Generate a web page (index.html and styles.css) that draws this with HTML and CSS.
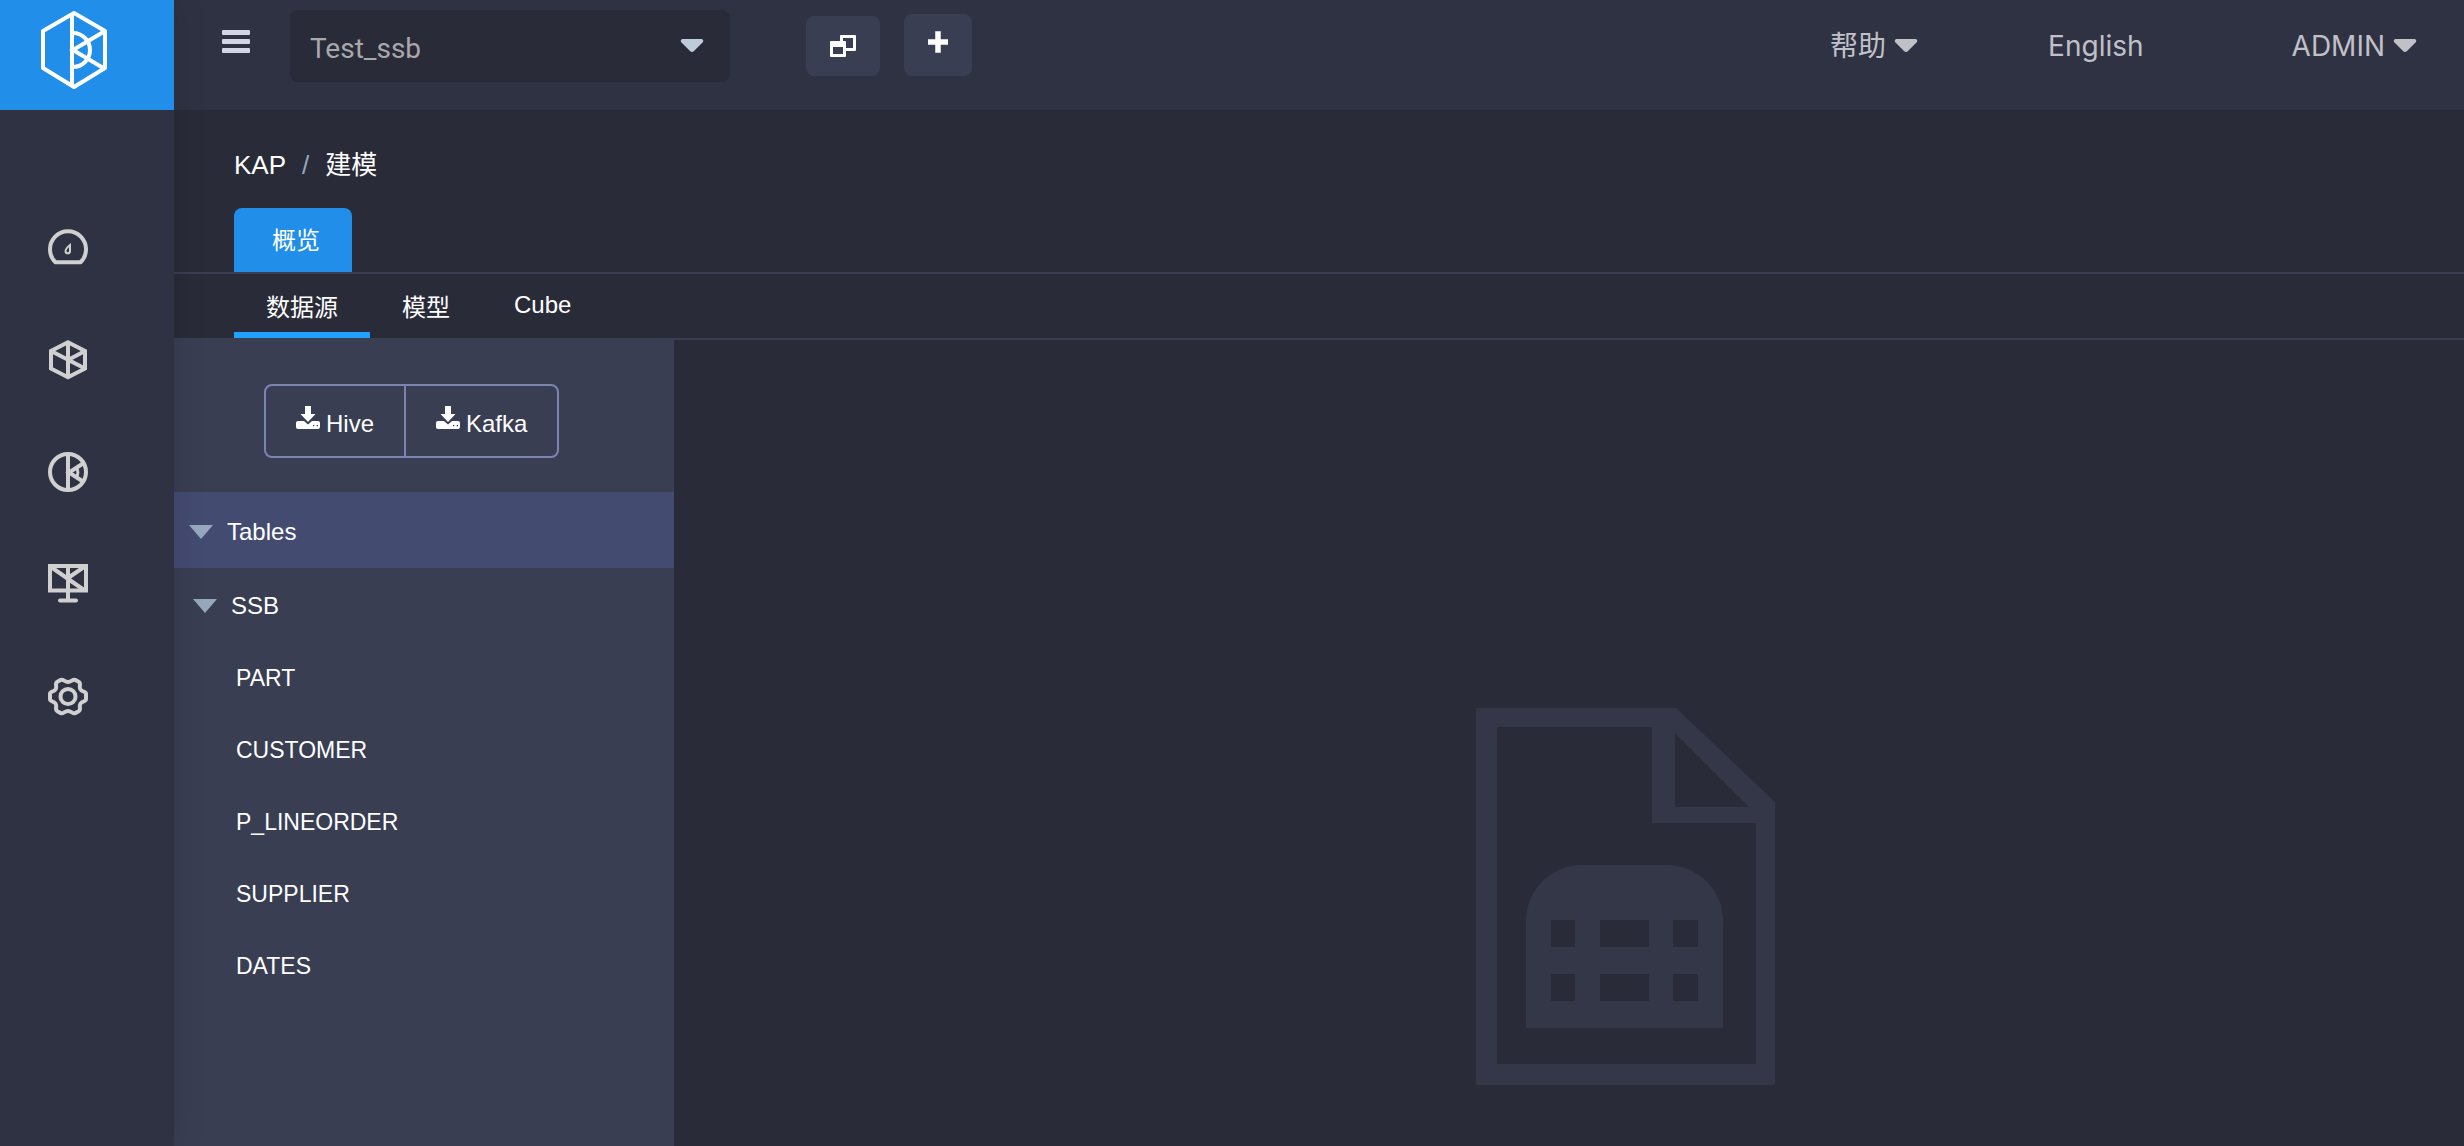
FILE: index.html
```html
<!DOCTYPE html>
<html lang="zh-CN">
<head>
<meta charset="utf-8">
<title>KAP - 建模</title>
<link rel="stylesheet" href="styles.css">
</head>
<body>
<div class="app">
  <aside class="sidebar">
    <a class="logo" href="#" aria-label="KAP">
      <svg width="68" height="80" viewBox="0 0 68 80" fill="none" stroke="#fff" stroke-width="4">
        <path d="M34 3 65 21V58L34 77 3 58V21Z" stroke-linejoin="round"/>
        <path d="M32 3V77M65 21 33 40 65 59"/>
        <path d="M33 23A17 17 0 0 1 33 57"/>
      </svg>
    </a>
    <nav class="side-nav">
      <a href="#" aria-label="仪表盘"><svg class="side-icon" viewBox="0 0 40 40" fill="none" stroke="#d0d0d0" stroke-width="4"><path d="M7.500 34.300A18 18 0 1 1 32.500 34.300Z"/><path d="M22 17C19.500 19 17.500 21 17.500 23.200 17.500 26 22 26 22 23.200Z" stroke-width="2"/></svg></a>
      <a href="#" aria-label="建模"><svg class="side-icon" viewBox="0 0 40 40" fill="none" stroke="#d0d0d0" stroke-width="4"><path d="M20 2.300 37 11V28.500L20 37.300 3 28.500V11Z"/><path d="M20 2V38M3 11 37 28.500M37 11 20 20"/></svg></a>
      <a href="#" aria-label="查询"><svg class="side-icon" viewBox="0 0 40 40" fill="none" stroke="#d0d0d0" stroke-width="4"><circle cx="20" cy="20" r="18"/><path d="M20 2V38M35 11.500 21 20.500 35 29.500"/><path d="M28 15C30.500 18 30.500 23 28 26" stroke-width="3"/></svg></a>
      <a href="#" aria-label="监控"><svg class="side-icon" viewBox="0 0 40 40" fill="none" stroke="#d0d0d0" stroke-width="4"><path d="M2 2H38V26.500H2Z"/><path d="M20 2V36M3 3 36 26M36 3 20 14"/><path d="M12 36.500H28" stroke-linecap="round"/></svg></a>
      <a href="#" aria-label="系统"><svg class="side-icon" viewBox="0 0 40 40" fill="none" stroke="#d0d0d0" stroke-width="4" stroke-linejoin="round"><circle cx="20" cy="20.500" r="7.500"/><path d="M12.500 4C15 2.500 16.500 6 20 6S25 2.500 27.500 4L31 6C33.500 7.500 30.500 10.500 32.500 13.500S38 15 38 18V23C38 26 34.500 24.500 32.500 27.500S33.500 33.500 31 35L27.500 37C25 38.500 23.500 35 20 35S15 38.500 12.500 37L9 35C6.500 33.500 9.500 30.500 7.500 27.500S2 26 2 23V18C2 15 5.500 16.500 7.500 13.500S6.500 7.500 9 6Z"/></svg></a>
    </nav>
  </aside>
  <div class="page">
    <header class="topbar">
      <button class="menu-toggle" type="button" aria-label="菜单"><span></span><span></span><span></span></button>
      <div class="project">
        <select class="project-select" aria-label="项目"><option>Test_ssb</option></select>
        <svg class="project-caret" width="24" height="14" viewBox="0 0 24 14"><path d="M2 0H22Q24 1 23 3L14 12Q12 14 10 12L1 3Q0 1 2 0Z" fill="#bfcbd9"/></svg>
      </div>
      <button class="tool tool-windows" type="button" aria-label="切换项目">
        <svg width="26" height="22" viewBox="0 0 26 22"><path fill="#fff" fill-rule="evenodd" d="M11 0H25Q26 0 26 1V15Q26 16 25 16H16V21Q16 22 15 22H1Q0 22 0 21V7Q0 6 1 6H10V1Q10 0 11 0ZM13 3V6H15Q16 6 16 7V13H23V3ZM3 12V19H13V12Z"/></svg>
      </button>
      <button class="tool tool-add" type="button" aria-label="添加项目">
        <svg width="20" height="22" viewBox="0 0 20 22"><path d="M10 3V19M2.500 11H17.500" stroke="#fff" stroke-width="5.500" stroke-linecap="square"/></svg>
      </button>
      <nav class="top-links">
        <a href="#">帮助<svg class="caret" width="24" height="14" viewBox="0 0 24 14"><path d="M2 0H22Q24 1 23 3L14 12Q12 14 10 12L1 3Q0 1 2 0Z" fill="currentColor"/></svg></a>
        <a class="language" href="#">English</a>
        <a href="#">ADMIN<svg class="caret" width="24" height="14" viewBox="0 0 24 14"><path d="M2 0H22Q24 1 23 3L14 12Q12 14 10 12L1 3Q0 1 2 0Z" fill="currentColor"/></svg></a>
      </nav>
    </header>
    <main class="main">
      <nav class="breadcrumb"><a href="#">KAP</a><span class="slash">/</span><span>建模</span></nav>
      <div class="tabs"><button class="tab" type="button">概览</button></div>
      <div class="subtabs">
        <button class="subtab active" type="button">数据源</button>
        <button class="subtab" type="button">模型</button>
        <button class="subtab" type="button">Cube</button>
      </div>
      <div class="workspace">
        <section class="source-panel">
          <div class="load-group">
            <button class="load" type="button"><svg width="24" height="24" viewBox="0 0 24 24" fill="#fff"><path d="M9 0H15V8H19.500L12 16 4.500 8H9Z"/><path fill-rule="evenodd" d="M2 15H8L12 18.500 16 15H22Q24 15 24 17V21Q24 23 22 23H2Q0 23 0 21V17Q0 15 2 15ZM17 19V20.300H18.300V19ZM20.700 19V20.300H22V19Z"/></svg>Hive</button>
            <button class="load" type="button"><svg width="24" height="24" viewBox="0 0 24 24" fill="#fff"><path d="M9 0H15V8H19.500L12 16 4.500 8H9Z"/><path fill-rule="evenodd" d="M2 15H8L12 18.500 16 15H22Q24 15 24 17V21Q24 23 22 23H2Q0 23 0 21V17Q0 15 2 15ZM17 19V20.300H18.300V19ZM20.700 19V20.300H22V19Z"/></svg>Kafka</button>
          </div>
          <div class="tree-root"><svg width="24" height="14" viewBox="0 0 24 14"><path d="M0 0H24L12 14Z" fill="#97a8be"/></svg>Tables</div>
          <div class="tree-node"><svg width="24" height="14" viewBox="0 0 24 14"><path d="M0 0H24L12 14Z" fill="#97a8be"/></svg>SSB</div>
          <ul class="tree-leaves">
            <li>PART</li>
            <li>CUSTOMER</li>
            <li>P_LINEORDER</li>
            <li>SUPPLIER</li>
            <li>DATES</li>
          </ul>
        </section>
        <section class="empty">
          <svg width="299" height="377" viewBox="0 0 299 377" fill="#343748" fill-rule="evenodd">
            <path d="M0 0H200L299 94V377H0ZM21 19V356H280V115H176V19ZM199 25V99H273Z"/>
            <path d="M107 157H190A56 56 0 0 1 247 214V320H50V214A56 56 0 0 1 107 157ZM75 212V239H99V212ZM124 212V239H173V212ZM197 212V239H222V212ZM75 266V293H99V266ZM124 266V293H173V266ZM197 266V293H222V266Z"/>
          </svg>
        </section>
      </div>
    </main>
  </div>
</div>
</body>
</html>
```
FILE: styles.css
```css
* { box-sizing: border-box; }

body {
  margin: 0;
  background: #292b38;
  color: #fff;
  font-family: "Liberation Sans", "Noto Sans CJK SC", sans-serif;
  font-size: 24px;
}

a { color: inherit; text-decoration: none; }

button {
  margin: 0;
  padding: 0;
  border: 0;
  background: none;
  color: inherit;
  font: inherit;
}

svg { display: block; flex: none; }

.app { display: flex; min-height: 100vh; }

.sidebar {
  flex: none;
  z-index: 1;
  width: 174px;
  background: #2f3243;
  box-shadow: 0 0 32px rgba(0, 0, 0, 0.12);
}

.logo {
  display: flex;
  align-items: flex-start;
  height: 110px;
  padding: 10px 40px;
  background: #218fea;
}

.side-nav {
  display: flex;
  flex-direction: column;
  gap: 72px;
  padding: 118px 48px 0;
}

.side-icon { width: 40px; height: 40px; }

.page { display: flex; flex: 1; flex-direction: column; min-width: 0; }

.topbar {
  display: flex;
  align-items: flex-start;
  height: 110px;
  padding: 10px 47px 0 48px;
  background: #2f3243;
}

.menu-toggle {
  display: flex;
  flex-direction: column;
  gap: 4px;
  width: 28px;
  margin: 20px 40px 0 0;
}

.menu-toggle span { width: 28px; height: 5px; border-radius: 1px; background: #d1d5e5; }

.project { position: relative; width: 440px; margin-right: 76px; }

.project-select {
  width: 100%;
  height: 72px;
  padding: 4px 20px 0;
  border: 0;
  border-radius: 8px;
  appearance: none;
  background: #292b38;
  color: #a9a9ac;
  font-family: Roboto, sans-serif;
  font-size: 28px;
}

.project-caret { position: absolute; top: 29px; right: 26px; pointer-events: none; }

.tool {
  display: flex;
  align-items: center;
  justify-content: center;
  border-radius: 8px;
  background: #393e53;
}

.tool-windows { width: 74px; height: 60px; margin: 6px 24px 0 0; }
.tool-add { width: 68px; height: 62px; padding-bottom: 6px; margin-top: 4px; }

.top-links {
  display: flex;
  gap: 130px;
  margin-left: auto;
  color: #c0c1c7;
  font-family: Inter, "Noto Sans CJK SC", sans-serif;
  font-size: 28px;
  line-height: 72px;
}

.top-links a { display: flex; align-items: center; gap: 8px; }
.top-links .language { padding-right: 18px; }

.main { display: flex; flex: 1; flex-direction: column; }

.breadcrumb {
  display: flex;
  gap: 16px;
  padding: 36px 60px 0;
  font-size: 26px;
  line-height: 38px;
}

.slash { color: #97a8be; }

.tabs {
  padding: 24px 60px 0;
  border-bottom: 2px solid #393e53;
}

.tab {
  display: block;
  height: 64px;
  padding: 0 32px 4px 38px;
  border-radius: 8px 8px 0 0;
  background: #218fea;
}

.subtabs {
  display: flex;
  padding: 0 60px;
  border-bottom: 2px solid #393e53;
}

.subtab { height: 64px; padding: 4px 32px 0; border-bottom: 6px solid transparent; }
.subtab.active { border-color: #20a0ff; }

.workspace { display: flex; flex: 1; }

.source-panel { flex: none; width: 500px; background: #393e53; }

.load-group {
  display: flex;
  width: fit-content;
  margin: 44px 0 34px 90px;
  border: 2px solid #7c84b2;
  border-radius: 8px;
}

.load {
  display: flex;
  gap: 6px;
  height: 70px;
  padding: 20px 30px 0;
  line-height: 36px;
}

.load + .load { border-left: 2px solid #7c84b2; }

.tree-root, .tree-node { display: flex; align-items: center; gap: 14px; }
.tree-root { height: 76px; padding: 4px 15px 0; background: #444b71; }
.tree-node { height: 72px; margin-top: 2px; padding: 0 19px; }

.tree-leaves {
  margin: 0;
  padding: 0 62px;
  list-style: none;
  font-size: 23px;
  line-height: 72px;
}

.empty {
  display: flex;
  flex: 1;
  align-items: flex-start;
  justify-content: center;
  padding: 368px 0 0 112px;
}
```
